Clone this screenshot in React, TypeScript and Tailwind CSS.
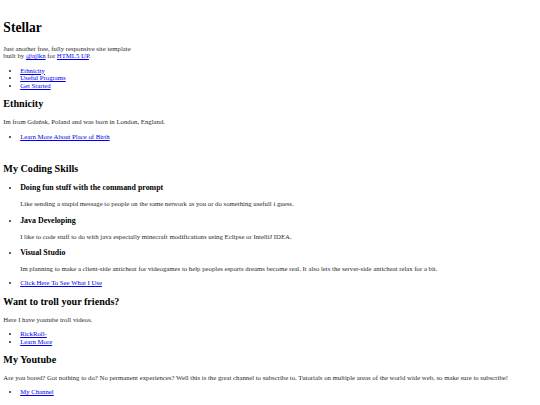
const link = "text-[#0000ee] underline";
const h2 = "my-[8.37px] text-[10.14px] leading-[11.59px] font-bold text-black";
const h3 = "my-[7.86px] text-[7.91px] leading-[9.03px] font-bold text-black";
const para = "my-[6.72px]";
const list = "my-[6.72px] pl-[16.8px] list-disc";

const skills = [
  {
    title: "Doing fun stuff with the command prompt",
    text: "Like sending a stupid message to people on the same network as you or do something usefull i guess.",
  },
  {
    title: "Java Developing",
    text: "I like to code stuff to do with java especially minecraft modifications using Eclipse or IntelliJ IDEA.",
  },
  {
    title: "Visual Studio",
    text: "Im planning to make a client-side anticheat for videogames to help peoples esports dreams become real. It also lets the server-side anticheat relax for a bit.",
  },
];

export default function App() {
  return (
    <div className="min-h-screen bg-white text-[#2a2a2a] font-['Liberation_Serif',serif] text-[6.76px] leading-[7.73px] p-[3.36px]">
      {/* header */}
      <header>
        {/* broken logo image still takes a line */}
        <div className="h-[7.73px]" />
        <h1 className="my-[9px] text-[13.52px] leading-[15.46px] font-bold text-black">Stellar</h1>
        <p className={para}>
          Just another free, fully responsive site template
          <br />
          built by <a href="#" className={link}>@ajlkn</a> for{" "}
          <a href="#" className={link}>HTML5 UP</a>.
        </p>
      </header>

      <nav>
        <ul className={list}>
          <li><a href="#" className={link}>Ethnicity</a></li>
          <li><a href="#" className={link}>Useful Programs</a></li>
          <li><a href="#" className={link}>Get Started</a></li>
        </ul>
      </nav>

      <section>
        <h2 className={h2}>Ethnicity</h2>
        <p className={para}>Im from Gdańsk, Poland and was born in London, England.</p>
        <ul className={list}>
          <li><a href="#" className={link}>Learn More About Place of Birth</a></li>
        </ul>
        <div className="h-[7.73px]" />
      </section>

      <section>
        <h2 className={h2}>My Coding Skills</h2>
        <ul className={list}>
          {skills.map((s) => (
            <li key={s.title}>
              <h3 className={h3}>{s.title}</h3>
              <p className={para}>{s.text}</p>
            </li>
          ))}
        </ul>
        <ul className={list}>
          <li><a href="#" className={link}>Click Here To See What I Use</a></li>
        </ul>
      </section>

      <section>
        <h2 className={h2}>Want to troll your friends?</h2>
        <p className={para}>Here I have youtube troll videos.</p>
        <ul className={list}>
          <li><a href="#" className={link}>RickRoll-</a></li>
          <li><a href="#" className={link}>Learn More</a></li>
        </ul>
      </section>

      <section>
        <h2 className={h2}>My Youtube</h2>
        <p className={para}>
          Are you bored? Got nothing to do? No permanent experiences? Well this is the great channel to subscribe to. Tutorials on multiple areas of the world wide web, so make sure to subscribe!
        </p>
        <ul className={list}>
          <li><a href="#" className={link}>My Channel</a></li>
        </ul>
      </section>
    </div>
  );
}
